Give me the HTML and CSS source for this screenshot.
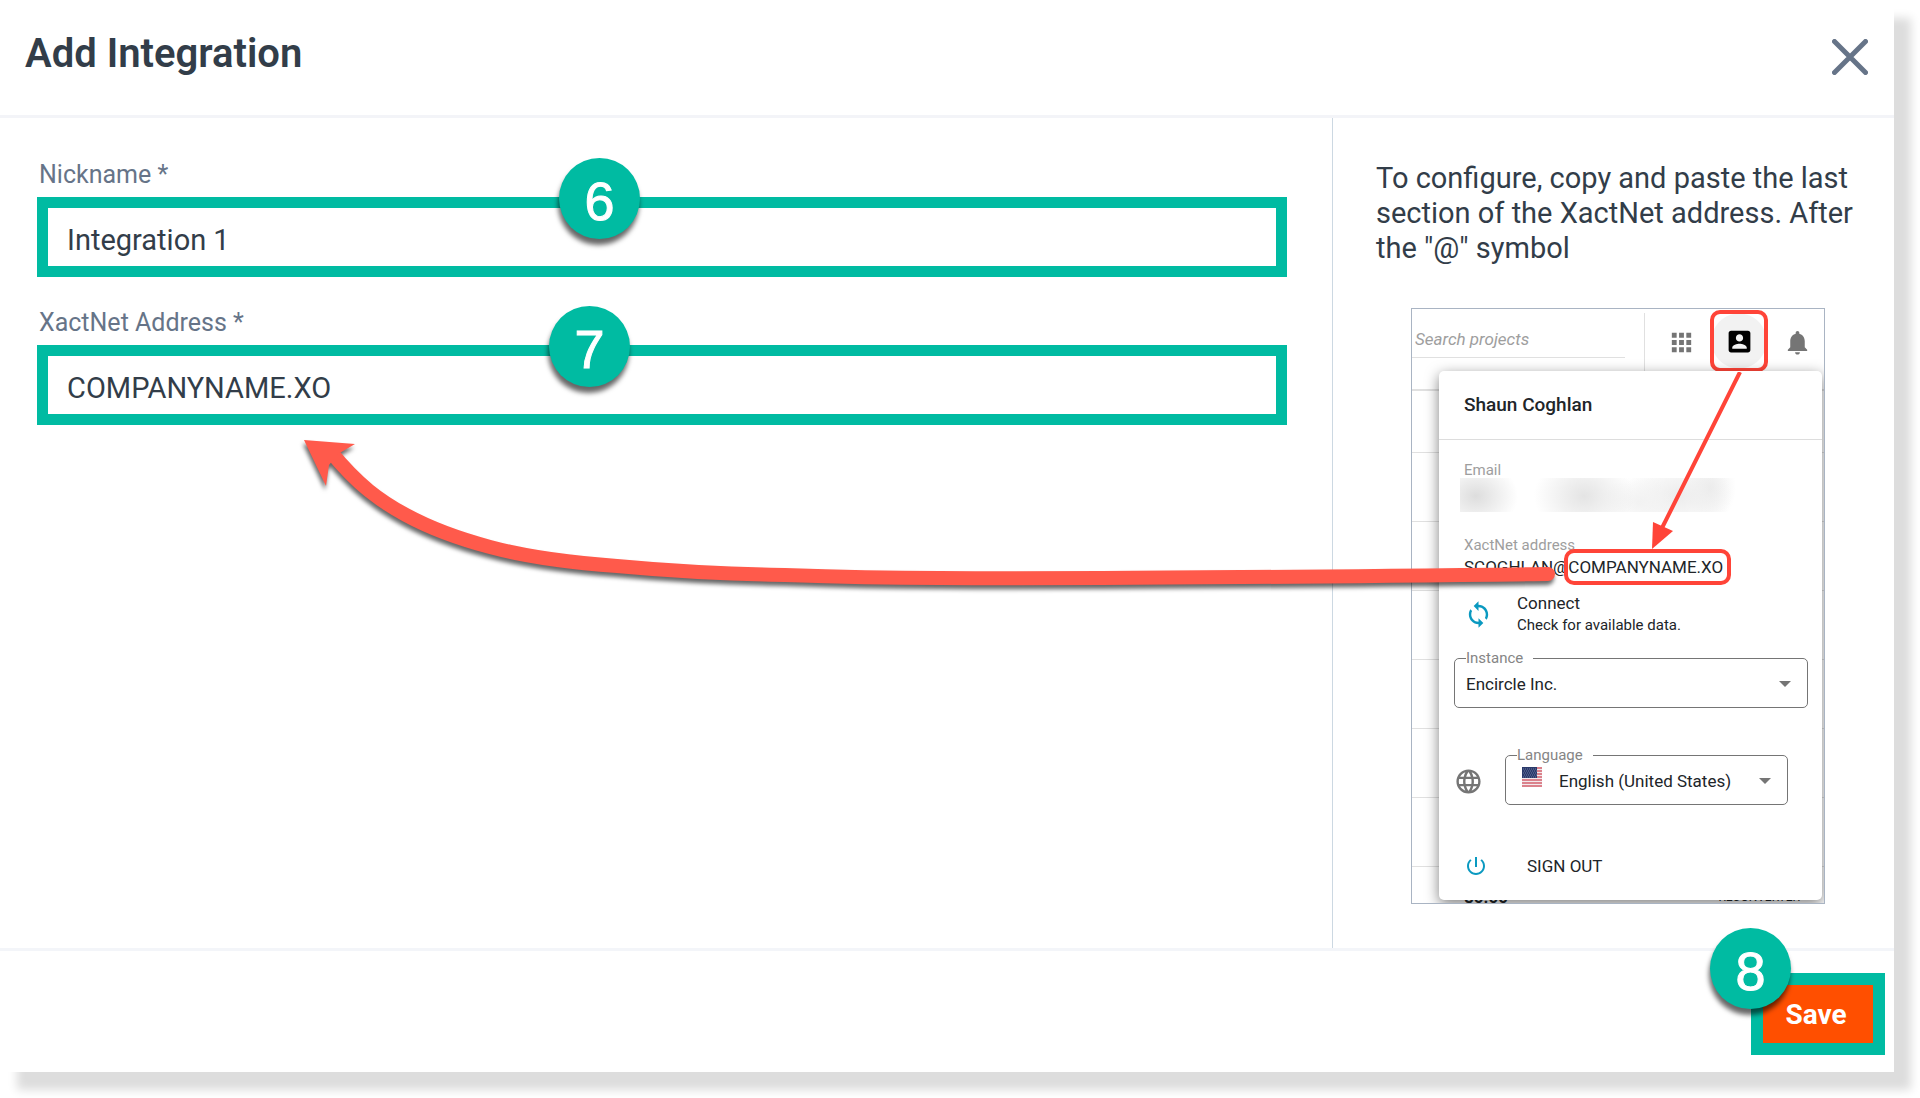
FILE: index.html
```
<!DOCTYPE html>
<html lang="en">
<head>
    <meta charset="utf-8">
    <title>Add Integration</title>
    <link rel="stylesheet" href="styles.css">
</head>
<body>
    <main class="dialog">
        <header class="dialog-header">
            <h1>Add Integration</h1>
            <button type="button" class="close-button" aria-label="Close">
                <svg viewBox="0 0 36 36"><path d="M2.5 2.5l31 31M33.5 2.5l-31 31"/></svg>
            </button>
        </header>

        <div class="dialog-body">
            <form class="fields" id="integrationForm">
                <div class="form-group">
                    <label for="nickname">Nickname *</label>
                    <input type="text" id="nickname" value="Integration 1">
                    <span class="step step-nickname">6</span>
                </div>
                <div class="form-group">
                    <label for="address">XactNet Address *</label>
                    <input type="text" id="address" value="COMPANYNAME.XO">
                    <span class="step step-address">7</span>
                </div>
            </form>

            <aside class="help">
                <p>To configure, copy and paste the last section of the XactNet address. After the "@" symbol</p>

                <div class="preview">
                    <div class="toolbar">
                        <input type="text" class="search" placeholder="Search projects" aria-label="Search projects">
                        <div class="tools">
                            <button type="button" aria-label="Apps">
                                <svg class="icon" viewBox="0 0 24 24"><path d="M4 8h4V4H4zm6 12h4v-4h-4zm-6 0h4v-4H4zm0-6h4v-4H4zm6 0h4v-4h-4zm6-10v4h4V4zm-6 4h4V4h-4zm6 6h4v-4h-4zm0 6h4v-4h-4z"/></svg>
                            </button>
                            <button type="button" class="highlighted" aria-label="Account">
                                <svg class="icon" viewBox="0 0 24 24"><path d="M3 5v14c0 1.100.890 2 2 2h14c1.100 0 2-.9 2-2V5c0-1.100-.9-2-2-2H5c-1.110 0-2 .9-2 2zm12 4c0 1.660-1.340 3-3 3s-3-1.340-3-3 1.340-3 3-3 3 1.340 3 3zm-9 8c0-2 4-3.100 6-3.100s6 1.100 6 3.100v1H6z"/></svg>
                            </button>
                            <button type="button" aria-label="Notifications">
                                <svg class="icon" viewBox="0 0 24 24"><path d="M12 22c1.100 0 2-.9 2-2h-4c0 1.100.890 2 2 2zm6-6v-5c0-3.070-1.640-5.640-4.500-6.320V4c0-.83-.67-1.500-1.500-1.500s-1.500.670-1.500 1.500v.680C7.630 5.360 6 7.920 6 11v5l-2 2v1h16v-1z"/></svg>
                            </button>
                        </div>
                    </div>
                    <div class="rows">
                        <div class="row"></div>
                        <div class="row"></div>
                        <div class="row"></div>
                        <div class="row"></div>
                        <div class="row"></div>
                        <div class="row"></div>
                        <div class="row"></div>
                        <div class="row row-last"><b>$0.00</b><span>RECONVERTER</span></div>
                    </div>

                    <section class="menu">
                        <h2>Shaun Coghlan</h2>
                        <div class="caption">Email</div>
                        <div class="redacted"></div>
                        <div class="caption">XactNet address</div>
                        <div class="value">SCOGHLAN@<span class="marked">COMPANYNAME.XO</span></div>

                        <div class="connect">
                            <svg class="icon" viewBox="0 0 24 24"><path d="M12 4V1L8 5l4 4V6c3.310 0 6 2.690 6 6 0 1.010-.25 1.970-.7 2.800l1.460 1.460C19.540 15.030 20 13.570 20 12c0-4.420-3.580-8-8-8zm0 14c-3.310 0-6-2.690-6-6 0-1.010.250-1.970.700-2.800L5.240 7.740C4.460 8.970 4 10.430 4 12c0 4.420 3.580 8 8 8v3l4-4-4-4z"/></svg>
                            <div>
                                <div>Connect</div>
                                <small>Check for available data.</small>
                            </div>
                        </div>

                        <fieldset class="instance">
                            <legend><label for="instance">Instance</label></legend>
                            <select id="instance"><option>Encircle Inc.</option></select>
                            <svg class="caret" viewBox="0 0 12 6"><path d="M0 0h12L6 6z"/></svg>
                        </fieldset>

                        <div class="language-row">
                            <svg class="icon" viewBox="0 0 24 24"><path d="M11.990 2C6.470 2 2 6.480 2 12s4.470 10 9.990 10C17.520 22 22 17.520 22 12S17.520 2 11.990 2zm6.930 6h-2.950c-.32-1.250-.78-2.450-1.380-3.560 1.840.630 3.370 1.910 4.330 3.560zM12 4.040c.830 1.200 1.480 2.530 1.910 3.960h-3.820c.430-1.430 1.080-2.760 1.910-3.960zM4.260 14C4.100 13.360 4 12.690 4 12s.1-1.360.260-2h3.380c-.08.660-.14 1.320-.14 2s.06 1.340.140 2zm.820 2h2.950c.320 1.250.780 2.450 1.380 3.560-1.840-.63-3.370-1.900-4.330-3.560zm2.950-8H5.080c.960-1.660 2.490-2.930 4.330-3.560C8.810 5.550 8.350 6.750 8.030 8zM12 19.960c-.83-1.200-1.480-2.530-1.910-3.960h3.820c-.43 1.430-1.080 2.760-1.910 3.960zM14.340 14H9.660c-.09-.66-.16-1.320-.16-2s.07-1.350.160-2h4.680c.090.650.160 1.320.160 2s-.07 1.340-.16 2zm.25 5.560c.6-1.110 1.060-2.310 1.380-3.560h2.950c-.96 1.650-2.490 2.930-4.330 3.560zM16.360 14c.080-.66.140-1.320.140-2s-.06-1.340-.14-2h3.380c.160.640.260 1.310.260 2s-.1 1.360-.26 2z"/></svg>
                            <fieldset>
                                <legend><label for="language">Language</label></legend>
                                <svg class="flag" viewBox="0 0 20 20">
                                    <rect width="20" height="20" fill="#f3e9ec"/>
                                    <path d="M0 1h20M0 4h20M0 7h20M0 10h20M0 13h20M0 16h20M0 19h20" stroke="#d4606c" stroke-width="1.600"/>
                                    <rect width="15" height="11" fill="#2b3a6b"/>
                                    <path d="M1 2h14M2 4h13M1 6h14M2 8h13M1 10h14" stroke="#7f8ab0" stroke-width=".8" stroke-dasharray="1 1"/>
                                </svg>
                                <select id="language"><option>English (United States)</option></select>
                                <svg class="caret" viewBox="0 0 12 6"><path d="M0 0h12L6 6z"/></svg>
                            </fieldset>
                        </div>

                        <button type="button" class="sign-out">
                            <svg class="icon" viewBox="0 0 24 24"><path d="M13 3h-2v10h2zm4.830 2.170l-1.420 1.420C17.990 7.860 19 9.810 19 12c0 3.870-3.130 7-7 7s-7-3.130-7-7c0-2.190 1.010-4.140 2.580-5.420L6.170 5.170C4.230 6.820 3 9.260 3 12c0 4.970 4.030 9 9 9s9-4.030 9-9c0-2.740-1.230-5.180-3.170-6.830z"/></svg>
                            SIGN OUT
                        </button>
                    </section>

                    <!-- account icon to the address -->
                    <svg class="menu-arrow" viewBox="0 0 90 180">
                        <path d="M88 0L10 156" fill="none" stroke="#ff4438" stroke-width="4"/>
                        <path d="M0 177L1 150L21 159z" fill="#ff4438"/>
                    </svg>
                </div>
            </aside>
        </div>

        <footer class="dialog-footer">
            <div class="save">
                <button type="submit" form="integrationForm">Save</button>
                <span class="step step-save">8</span>
            </div>
        </footer>

        <!-- address to the form field -->
        <svg class="copy-arrow" viewBox="0 0 1270 160">
            <path class="line" d="M31 20C58 53 80 69 106 83C130 96 160 107 190 115C230 126 275 131 317 134C370 139 430 142 485 143C540 145 590 146 640 146C800 147 1000 145 1248 142"/>
            <path class="head" d="M4 8L55 12L38 22L29 33L26 54z"/>
        </svg>
    </main>
</body>
</html>
```
FILE: styles.css
```
* {
    box-sizing: border-box;
}

body {
    margin: 0;
    min-height: 100vh;
    display: flex;
    padding: 0 26px 26px 0;
    background-color: #fff;
    color: #323d49;
    font-family: Roboto, "Liberation Sans", sans-serif;
    font-size: 29px;
    overflow-x: hidden;
}

button, input, select {
    font: inherit;
    color: inherit;
}

button {
    border: none;
    padding: 0;
    background: none;
    cursor: pointer;
}

.dialog {
    position: relative;
    flex: 1;
    display: flex;
    flex-direction: column;
    background-color: #fff;
    box-shadow: 17px 18px 9px #ddd;
}

/* Header */
.dialog-header {
    display: flex;
    justify-content: space-between;
    align-items: center;
    height: 118px;
    padding: 0 26px 2px 25px;
    border-bottom: 3px solid #f3f4f8;
}

.dialog-header h1 {
    margin: 0 0 6px;
    font-size: 40px;
    font-weight: 600;
    line-height: 50px;
}

.close-button svg {
    display: block;
    width: 36px;
    height: 36px;
    fill: none;
    stroke: #667488;
    stroke-width: 5;
    stroke-linecap: round;
}

/* Form */
.dialog-body {
    flex: 1;
    display: flex;
}

.fields {
    flex: 1;
    display: flex;
    flex-direction: column;
    gap: 31px;
    padding: 42px 45px 42px 37px;
}

.form-group {
    position: relative;
    display: flex;
    flex-direction: column;
    gap: 7px;
}

.form-group label {
    color: #667488;
    font-size: 25px;
    line-height: 30px;
    margin-left: 2px;
}

.form-group input {
    height: 80px;
    padding: 6px 19px 0;
    border: 11px solid #00bba2;
    background-color: #fff;
}

/* Numbered step badges */
.step {
    position: absolute;
    display: flex;
    justify-content: center;
    align-items: center;
    width: 81px;
    height: 81px;
    padding-top: 4px;
    border-radius: 50%;
    background-color: #00bba2;
    color: #fff;
    font-family: "Liberation Sans", Arial, sans-serif;
    font-size: 54px;
    -webkit-text-stroke: 1px #fff;
    box-shadow: -1px 6px 5px rgba(0, 0, 0, 0.6);
}

.step-nickname {
    top: -2px;
    left: 522px;
}

.step-address {
    top: -2px;
    left: 512px;
}

.step-save {
    top: -45px;
    left: -41px;
}

/* Help column */
.help {
    width: 562px;
    padding: 43px 40px;
    border-left: 1px solid #ccd8e2;
}

.help p {
    margin: 0 0 42px 3px;
    line-height: 35px;
}

.preview {
    position: relative;
    display: flex;
    flex-direction: column;
    width: 414px;
    height: 596px;
    margin-left: 38px;
    border: 1px solid #a9b4c3;
    overflow: hidden;
    color: #212529;
    font-size: 17px;
}

.icon {
    display: block;
    width: 29px;
    height: 29px;
    fill: #757575;
}

.toolbar {
    display: flex;
    flex-shrink: 0;
    height: 82px;
    border-bottom: 2px solid #e0e0e0;
}

.search {
    width: 213px;
    height: 49px;
    padding: 12px 3px 0;
    border: none;
    border-bottom: 1px solid #e0e0e0;
    font-style: italic;
    background: none;
}

.search::placeholder {
    color: #9e9e9e;
}

.tools {
    flex: 1;
    display: flex;
    align-items: flex-start;
    margin: 4px 0 0 19px;
    padding-left: 7px;
    border-left: 1px solid #e0e0e0;
}

.tools button {
    display: flex;
    justify-content: center;
    align-items: center;
    width: 58px;
    height: 58px;
    flex-shrink: 0;
}

.tools .highlighted {
    height: 62px;
    margin-top: -3px;
    border: 4px solid #ff4438;
    border-radius: 10px;
    background: radial-gradient(circle, #f2f2f2 27px, #fff 28px);
}

.highlighted .icon {
    fill: #000;
}

.row {
    height: 69px;
    border-bottom: 1px solid #e0e0e0;
}

.row:first-child {
    height: 62px;
}

.row-last {
    display: flex;
    justify-content: space-between;
    padding: 20px 24px 0 52px;
    line-height: 20px;
    font-size: 17px;
}

.row-last span {
    font-size: 12px;
}

/* Account menu */
.menu {
    position: absolute;
    top: 62px;
    left: 27px;
    right: 2px;
    bottom: 3px;
    border-radius: 5px;
    background-color: #fff;
    box-shadow: 0 4px 14px rgba(0, 0, 0, 0.5);
    line-height: 20px;
}

.menu h2 {
    margin: 0 0 22px;
    padding: 23px 25px;
    border-bottom: 1px solid #ddd;
    font-size: 19px;
    font-weight: 500;
    line-height: 22px;
}

.caption {
    margin-left: 25px;
    color: #9e9e9e;
    font-size: 15px;
    line-height: 16px;
}

/* Hidden e-mail address */
.redacted {
    width: 280px;
    height: 34px;
    margin: 0 0 25px 21px;
    background:
        radial-gradient(ellipse 42px 34px at 16px 18px, #ddd, transparent),
        radial-gradient(ellipse 50px 40px at 124px 18px, #e4e4e4, transparent),
        radial-gradient(ellipse 40px 26px at 180px 24px, #f2f2f2, transparent),
        radial-gradient(ellipse 54px 38px at 218px 18px, #ececec, transparent),
        radial-gradient(ellipse 26px 34px at 250px 10px, #ececec, transparent);
}

.value {
    margin: 4px 0 16px 25px;
}

.marked {
    position: relative;
}

.marked::after {
    content: "";
    position: absolute;
    inset: -8px -8px -8px -4px;
    border: 4px solid #ff4438;
    border-radius: 10px;
}

.connect {
    display: flex;
    align-items: center;
    gap: 24px;
    margin-left: 25px;
}

.connect small {
    display: block;
    margin-top: 2px;
    font-size: 15px;
}

.connect .icon, .sign-out .icon {
    fill: #0a99c0;
}

.menu fieldset {
    display: flex;
    align-items: center;
    height: 58px;
    margin: 0;
    padding: 0 16px 5px 11px;
    border: 1px solid #757575;
    border-radius: 5px;
}

.menu legend {
    padding: 0 10px 0 0;
    color: #858585;
    font-size: 15px;
    line-height: 16px;
}

.menu select {
    flex: 1;
    min-width: 0;
    padding: 0;
    border: none;
    background: none;
    appearance: none;
}

.caret {
    width: 12px;
    height: 6px;
    fill: #757575;
}

.menu .instance {
    margin: 15px 14px 39px 15px;
}

.language-row {
    display: flex;
    align-items: center;
    gap: 22px;
    margin: 0 34px 49px 15px;
}

.language-row > .icon {
    margin-top: 11px;
}

.language-row fieldset {
    flex: 1;
}

.flag {
    width: 20px;
    height: 20px;
    margin: 0 17px 8px 5px;
}

.sign-out {
    display: flex;
    align-items: center;
    gap: 39px;
    margin-left: 25px;
}

.sign-out .icon {
    width: 24px;
    height: 24px;
}

.menu-arrow {
    position: absolute;
    top: 63px;
    left: 240px;
    width: 90px;
    height: 180px;
}

/* Footer */
.dialog-footer {
    display: flex;
    justify-content: flex-end;
    padding: 22px 9px 17px;
    border-top: 3px solid #f3f5f9;
}

.save {
    position: relative;
}

.save button {
    display: block;
    width: 134px;
    height: 82px;
    padding-right: 4px;
    border: 12px solid #00bba2;
    background-color: #ff4f00;
    color: #fff;
    font-size: 28px;
    font-weight: bold;
}

.copy-arrow {
    position: absolute;
    top: 432px;
    left: 300px;
    width: 1270px;
    height: 160px;
    pointer-events: none;
    filter: drop-shadow(-1px 4px 2px rgba(0, 0, 0, 0.6));
}

.copy-arrow .line {
    fill: none;
    stroke: #ff5a4b;
    stroke-width: 14;
    stroke-linecap: round;
}

.copy-arrow .head {
    fill: #ff5a4b;
}
```
